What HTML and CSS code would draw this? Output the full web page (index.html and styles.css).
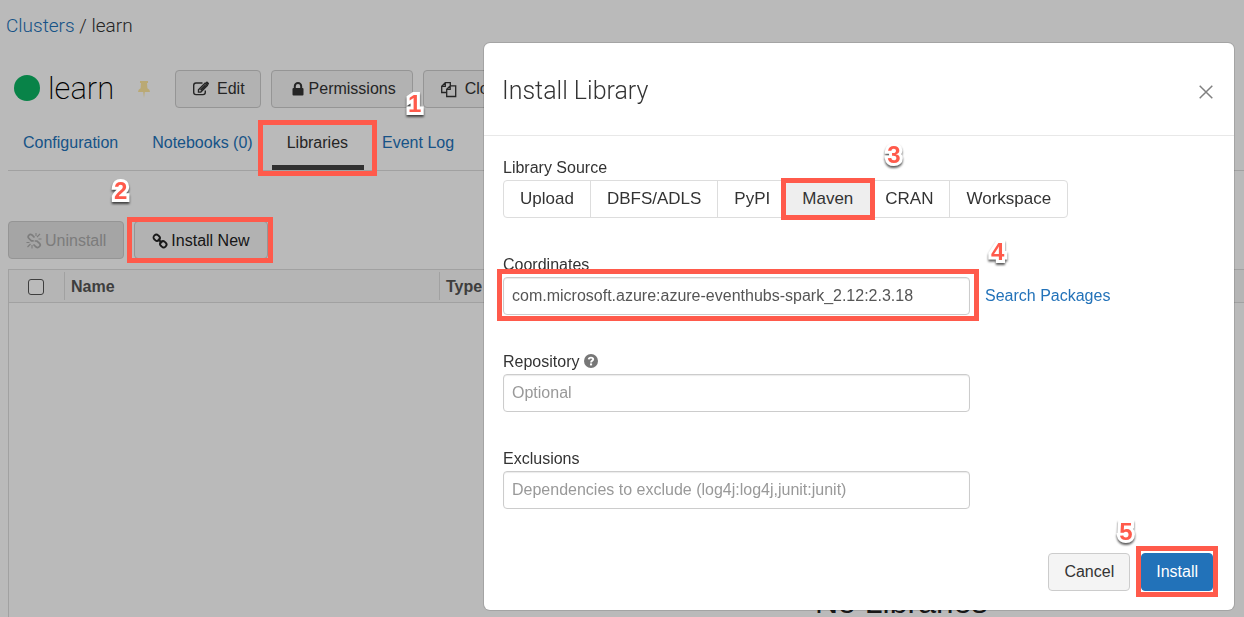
FILE: index.html
```html
<!DOCTYPE html>
<html lang="en">
<head>
<meta charset="utf-8">
<title>Clusters / learn</title>
<link rel="stylesheet" href="styles.css">
</head>
<body>
<main class="page">
  <nav class="breadcrumb"><a href="#">Clusters</a> <span>/</span> learn</nav>
  <header class="cluster-head">
    <span class="status-dot"></span>
    <h1 class="cluster-name">learn</h1>
    <svg class="pin" viewBox="0 0 12 17" width="12" height="17"><path d="M2 0h8v2H9l.4 5.2Q12 8.500 12 11H6.800L6 17 5.200 11H0Q0 8.500 2.600 7.200L3 2H2z" fill="#ffe8a0"/></svg>
    <button class="btn btn-edit" type="button"><svg class="icon" viewBox="0 0 18 16" width="18" height="16"><g fill="none" stroke="#333" stroke-width="1.400"><path d="M10.500 2H4Q1.700 2 1.700 4.300v7Q1.700 13.600 4 13.600h7q2.300 0 2.300-2.300V9.500"/><path d="M6.500 8.800 13 2.300l2.300 2.300-6.500 6.500H6.500z"/></g><path d="M8 8.500 13 3.500l1.500 1.400-5.300 5.200zM13.300 1.700l1-1q.7-.5 1.300 0l1.200 1.200q.6.700 0 1.300l-1 1z" fill="#333"/></svg>Edit</button>
    <button class="btn btn-lock" type="button"><svg class="icon" viewBox="0 0 12 14" width="12" height="14"><path d="M2.800 6.500V4.300a3.200 3.200 0 0 1 6.400 0v2.200" fill="none" stroke="#333" stroke-width="2"/><rect x="0.500" y="6" width="11" height="7.500" rx="1" fill="#333"/></svg>Permissions</button>
    <button class="btn" type="button"><svg class="icon" viewBox="0 0 18 17" width="18" height="17"><path d="M6.700 11.500H1.700V5.300l3.600-3.600h5v3M5.300 1.700v3.600H1.700M10.200 4.800h5.500v10.700h-9V8.300zM10.200 4.800v3.500H6.700" fill="none" stroke="#333" stroke-width="1.300"/></svg>Clone</button>
  </header>
  <nav class="tabs">
    <a class="tab" href="#">Configuration</a>
    <a class="tab" href="#">Notebooks (0)</a>
    <a class="tab active" href="#">Libraries</a>
    <a class="tab" href="#">Event Log</a>
  </nav>
  <div class="actions">
    <button class="btn btn-tight" type="button" disabled><svg viewBox="0 0 16 16" width="16" height="16"><g fill="none" stroke="#777" stroke-width="1.700"><path d="M8.500 4.500 6 2Q4.300.8 2.800 2.300T3 5.500l2.400 2.300h2.300M13.500 13.500q1.500-1.600 0-3.200L11 8H8.700M7.500 11.500l2.700 2.500q1.600 1.300 3.300-.5"/><path stroke-width="1.100" d="M4.500 11 1.500 14M3.500 9.500H.5M6 12v3.500M11 4l3-3M12.500 6h3M10 3V0"/></g></svg>Uninstall</button>
    <button class="btn btn-tight btn-new" type="button"><svg viewBox="0 0 16 16" width="16" height="16"><g fill="none" stroke="#222" stroke-width="1.900"><rect x="1.500" y="2" width="6.500" height="5.500" rx="2.600" transform="rotate(45 4.700 4.700)"/><rect x="8" y="8.500" width="6.500" height="5.500" rx="2.600" transform="rotate(45 11.300 11.300)"/><path d="m6 6 4 4"/></g></svg>Install New</button>
  </div>
  <table class="libs">
    <colgroup><col class="col-check"><col class="col-name"><col></colgroup>
    <thead><tr><th><input type="checkbox" aria-label="Select all"></th><th><span>Name</span></th><th><span>Type</span></th></tr></thead>
    <tbody><tr><td class="empty" colspan="3">No Libraries</td></tr></tbody>
  </table>
</main>
<div class="backdrop"></div>

<section class="modal" role="dialog" aria-labelledby="dialog-title">
  <header class="modal-head">
    <h2 id="dialog-title">Install Library</h2>
    <button class="close" type="button" aria-label="Close"><svg viewBox="0 0 14 14" width="14" height="14"><path d="m.7.7 12.600 12.600M13.300.7.7 13.300" stroke="#808080" stroke-width="1.500"/></svg></button>
  </header>
  <div class="modal-body">
    <div class="field">
      <div class="label" id="source-label">Library Source</div>
      <div class="segments" role="group" aria-labelledby="source-label">
        <button type="button">Upload</button>
        <button type="button">DBFS/ADLS</button>
        <button type="button">PyPI</button>
        <span class="marked mark-maven"><button class="selected" type="button" aria-pressed="true">Maven</button><b class="step step-3">3</b></span>
        <button class="seg-cran" type="button">CRAN</button>
        <button type="button">Workspace</button>
      </div>
    </div>
    <div class="field">
      <label class="label" for="coords">Coordinates</label>
      <div class="coord-row">
        <span class="marked mark-coords"><input class="text" id="coords" type="text" value="com.microsoft.azure:azure-eventhubs-spark_2.12:2.3.18"></span>
        <a href="#">Search Packages</a><b class="step step-4">4</b>
      </div>
    </div>
    <div class="field">
      <label class="label" for="repo">Repository <svg viewBox="0 0 14 14" width="14" height="14"><circle cx="7" cy="7" r="7" fill="#777"/><path d="M4.700 5.400Q4.900 3.600 7 3.600t2.200 1.700Q9.200 6.200 8 6.900q-.9.500-.9 1.500" fill="none" stroke="#fff" stroke-width="1.900"/><path d="M6 9.400h2.100v2H6z" fill="#fff"/></svg></label>
      <input class="text" id="repo" type="text" placeholder="Optional">
    </div>
    <div class="field">
      <label class="label" for="excl">Exclusions</label>
      <input class="text" id="excl" type="text" placeholder="Dependencies to exclude (log4j:log4j,junit:junit)">
    </div>
  </div>
  <footer class="modal-foot">
    <button class="btn cancel" type="button">Cancel</button>
    <span class="marked mark-install"><button class="btn primary" type="button">Install</button><b class="step step-5">5</b></span>
  </footer>
</section>

<div class="callouts">
  <span class="box box-1"></span><b class="step step-1">1</b>
  <span class="box box-2"></span><b class="step step-2">2</b>
</div>
</body>
</html>
```
FILE: styles.css
```css
* { box-sizing: border-box; }
body { margin: 0; height: 100vh; overflow: hidden; font: 16px/20px "Liberation Sans", Arial, sans-serif; color: #333; background: #fff; }
button, input { font: inherit; color: inherit; margin: 0; }
a { color: #2272b9; text-decoration: none; }
svg { flex: none; }

.page { padding-left: 8px; }
.breadcrumb { padding-top: 14px; font: 300 19px/24px Roboto, sans-serif; margin-left: -2px; }
.cluster-head { display: flex; align-items: center; height: 38px; margin-top: 32px; padding-left: 6px; white-space: nowrap; }
.status-dot { width: 26px; height: 26px; margin-bottom: 2px; border-radius: 50%; background: #0cb463; }
.cluster-name { margin: 0; padding-left: 8px; width: 98px; font: 200 31px/38px Roboto, sans-serif; color: #000; }
.pin { margin-right: 25px; }
.btn { display: flex; align-items: center; justify-content: center; height: 38px; padding: 0 15px; border: 1px solid #ccc; border-radius: 4px; background: #f4f4f4; white-space: nowrap; }
.cluster-head .btn { margin-right: 10px; padding: 0 16px; }
.cluster-head .btn-edit { padding-right: 15px; }
.cluster-head .btn-lock { padding: 0 16px 0 20px; }
.icon { margin-right: 7px; }
.btn-lock .icon { margin-right: 5px; }
.tabs { display: flex; gap: 3px; height: 63px; border-bottom: 1px solid #ddd; }
.tab { padding: 25px 16px 0 15px; }
.tab.active { color: #333; border-bottom: 5px solid #444; }
.actions { display: flex; gap: 10px; padding: 50px 0 10px; }
.btn-tight { padding: 2px 17px 0; gap: 3px; }
.btn-new { color: #222; }
.btn:disabled { color: #aaa; background: #e2e2e2; }
.btn:disabled svg { opacity: .5; }
.libs { width: 100%; table-layout: fixed; border-collapse: separate; border-spacing: 0; border: 1px solid #ddd; border-width: 1px 0 0 1px; }
.col-check { width: 55px; }
.col-name { width: 375px; }
.libs th { height: 33px; padding: 0; text-align: left; background: #f9f9f9; border-bottom: 1px solid #ddd; color: #555; }
.libs th span { display: block; border-left: 1px solid #ddd; padding: 5px 6px 3px; }
.libs th input { display: block; width: 16px; height: 16px; margin: 2px 0 0 19px; appearance: none; border: 1px solid #555; border-radius: 3px; background: #fff; }
.libs .empty { padding: 283px 0 0 806px; font-size: 32px; line-height: 32px; white-space: nowrap; color: #222; }

.backdrop { position: fixed; inset: 0; background: rgba(0, 0, 0, .27); }

.modal { position: fixed; top: 43px; right: 10px; width: 750px; max-width: calc(100vw - 20px); background: #fff; border-radius: 6px; box-shadow: 0 0 0 1px rgba(0, 0, 0, .12); }
.modal-head { display: flex; align-items: center; justify-content: space-between; height: 93px; padding: 4px 21px 0 18px; border-bottom: 1px solid #e8e8e8; }
.modal-head h2 { margin: 0; font: 300 25px/36px Roboto, sans-serif; }
.close { display: flex; padding: 0; border: 0; background: none; margin-top: 2px; }
.modal-body { display: grid; gap: 37px; padding: 22px 19px 0; }
.label { display: block; margin-bottom: 2px; line-height: 20px; }
.label svg { vertical-align: -1px; }
.segments { display: flex; width: max-content; height: 38px; border: 1px solid #ddd; border-radius: 4px; font-size: 17px; }
.segments button { padding: 0 16px; border: 0; border-right: 1px solid #ddd; background: none; height: 100%; }
.segments > button:nth-child(3) { border-right: 0; }
.segments > button:last-child { border-right: 0; }
.segments .seg-cran { padding-left: 14px; }
.segments .selected { background: #eee; border-right: 1px solid #2272b9; }
.segments > .marked .selected { padding-right: 17px; }
.text { display: block; width: 467px; max-width: 100%; height: 38px; padding: 0 8px; border: 1px solid #ccc; border-radius: 4px; background: #fff; color: #555; box-shadow: inset 0 1px 1px rgba(0, 0, 0, .08); }
.text::placeholder { color: #999; opacity: 1; }
.coord-row { display: flex; align-items: center; gap: 15px; position: relative; }
.modal-foot { display: flex; justify-content: flex-end; gap: 11px; padding: 44px 21px 19px; }
.primary { padding: 0 14px; background: #2272b9; color: #fff; border-color: #2272b9; }

.marked { position: relative; display: block; }
.marked::after, .box { content: ""; position: absolute; border: 5px solid #ff5a4b; pointer-events: none; }
.mark-maven::after { inset: -3px -4px -3px -5px; }
.mark-coords::after { inset: -8px -9px -6px -6px; }
.mark-install::after { inset: -7px -5px -6px -5px; }
.callouts { position: absolute; top: 0; left: 0; }
.box-1 { left: 258px; top: 120px; width: 119px; height: 56px; }
.box-2 { left: 127px; top: 217px; width: 146px; height: 46px; }
.step { position: absolute; z-index: 2; font-size: 24px; line-height: 24px; color: #ff5a4b; -webkit-text-stroke: 6px #fff; paint-order: stroke fill; filter: drop-shadow(0 2px 1px rgba(0, 0, 0, .65)); }
.step-1 { left: 408px; top: 92px; }
.step-2 { left: 114px; top: 179px; }
.step-3 { left: 101px; top: -38px; }
.step-4 { left: 488px; top: -37px; }
.step-5 { left: -22px; top: -33px; }
```
